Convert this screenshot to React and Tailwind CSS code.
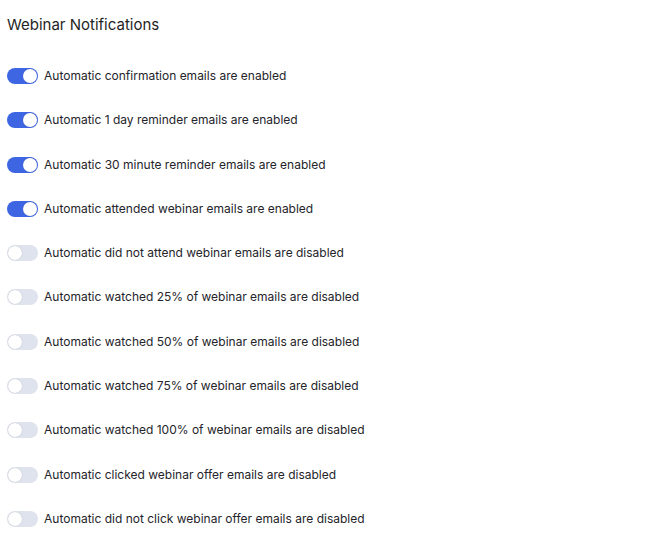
import React from "react";

const items = [
  ["Automatic confirmation emails are enabled", true],
  ["Automatic 1 day reminder emails are enabled", true],
  ["Automatic 30 minute reminder emails are enabled", true],
  ["Automatic attended webinar emails are enabled", true],
  ["Automatic did not attend webinar emails are disabled", false],
  ["Automatic watched 25% of webinar emails are disabled", false],
  ["Automatic watched 50% of webinar emails are disabled", false],
  ["Automatic watched 75% of webinar emails are disabled", false],
  ["Automatic watched 100% of webinar emails are disabled", false],
  ["Automatic clicked webinar offer emails are disabled", false],
  ["Automatic did not click webinar offer emails are disabled", false],
];

function Toggle({ on }) {
  return (
    <div
      className={
        on
          ? "w-[31px] h-[16px] rounded-full bg-[#3e66e3] flex items-center justify-end px-[1px] shrink-0"
          : "w-[31px] h-[16px] rounded-full bg-[#dfe3ed] flex items-center justify-start px-[1px] shrink-0"
      }
    >
      <div className="w-[14px] h-[14px] rounded-full bg-white shadow-[0_0_1px_rgba(0,0,0,0.25)]" />
    </div>
  );
}

export default function App() {
  return (
    <div className="w-[651px] h-[534px] bg-white pl-[7px] pt-[13px]" style={{ fontFamily: "Inter, 'Noto Sans', sans-serif" }}>
      <h1 className="text-[15px] leading-[20px] text-[#1f1f24] font-normal pt-[2px]">Webinar Notifications</h1>
      <div className="mt-[33px] flex flex-col gap-[28.3px]">
        {items.map(([label, on]) => (
          <div key={label} className="flex items-center gap-[6px] h-[16px]">
            <Toggle on={on} />
            <span className="text-[12px] text-[#24242a] whitespace-nowrap">{label}</span>
          </div>
        ))}
      </div>
    </div>
  );
}
